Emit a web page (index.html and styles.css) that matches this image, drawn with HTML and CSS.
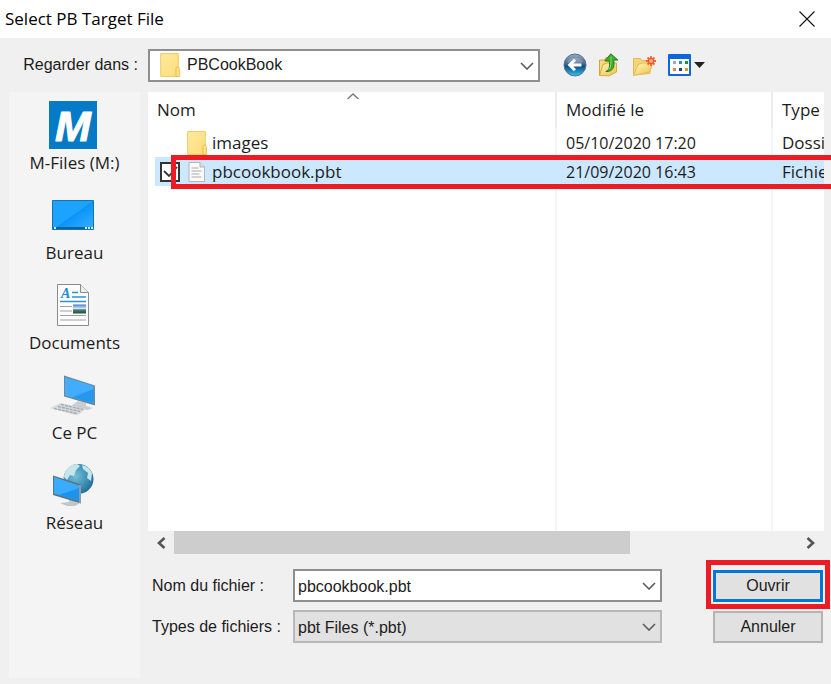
FILE: index.html
```html
<!DOCTYPE html>
<html lang="fr">
<head>
<meta charset="utf-8">
<meta name="viewport" content="width=device-width, initial-scale=1">
<title>Select PB Target File</title>
<link rel="stylesheet" href="styles.css">
</head>
<body>
<svg class="defs" aria-hidden="true">
  <defs>
    <linearGradient id="folder" x1="0" y1="0" x2="1" y2="1"><stop offset="0" stop-color="#ffe9a2"/><stop offset="1" stop-color="#ffdc78"/></linearGradient>
    <linearGradient id="gold" x1="0" y1="0" x2="1" y2="1"><stop offset="0" stop-color="#fff6b8"/><stop offset="1" stop-color="#efc04c"/></linearGradient>
    <linearGradient id="screen" x1="0" y1="0" x2="1" y2="1"><stop offset="0" stop-color="#1ca3ff"/><stop offset=".5" stop-color="#1ca3ff"/><stop offset=".51" stop-color="#0a94f8"/><stop offset="1" stop-color="#38b0ff"/></linearGradient>
    <linearGradient id="ball" x1="0" y1="0" x2="0" y2="1"><stop offset="0" stop-color="#9aa9bd"/><stop offset=".45" stop-color="#42698f"/><stop offset=".55" stop-color="#0b4c83"/><stop offset="1" stop-color="#32c5ef"/></linearGradient>
    <radialGradient id="globe" cx=".4" cy=".4" r=".65"><stop offset="0" stop-color="#75bfd9"/><stop offset=".6" stop-color="#3f91b7"/><stop offset="1" stop-color="#286b91"/></radialGradient>
    <linearGradient id="photo" x1="0" y1="0" x2="0" y2="1"><stop offset="0" stop-color="#427bd0"/><stop offset=".45" stop-color="#d3e8f3"/><stop offset=".6" stop-color="#477e72"/><stop offset="1" stop-color="#1e513e"/></linearGradient>
    <symbol id="i-folder" viewBox="0 0 20 24">
      <path d="M.7.5h17.6v23H.7z" fill="url(#folder)" stroke="#f0cd5c"/>
      <path d="M16 23.5v-8l1-1.5h1.3l1 1.500v8z" fill="#ffe48c" stroke="#e8bd45"/>
    </symbol>
    <symbol id="i-chevron" viewBox="0 0 14 8">
      <path d="M1 1l6 6 6-6" fill="none" stroke="#5c5c5c" stroke-width="1.6"/>
    </symbol>
  </defs>
</svg>

<div class="dialog">
  <header class="titlebar">
    <h1>Select PB Target File</h1>
    <button class="close" type="button" aria-label="Fermer">
      <svg width="16" height="16" viewBox="0 0 16 16"><path d="M.5.500l15 15M15.500.500l-15 15" stroke="#111" stroke-width="1.1"/></svg>
    </button>
  </header>

  <div class="body">
    <label class="look-label" for="look">Regarder dans :</label>
    <div class="topbar">
      <div class="combo look">
        <svg class="combo-icon" width="20" height="24"><use href="#i-folder"/></svg>
        <select id="look"><option>PBCookBook</option></select>
        <svg class="chevron" width="14" height="8"><use href="#i-chevron"/></svg>
      </div>
      <div class="tools">
        <button type="button" aria-label="Précédent">
          <svg width="24" height="24" viewBox="0 0 24 24">
            <circle cx="12" cy="12" r="11" fill="url(#ball)" stroke="#587594"/>
            <path d="M4 9a9 8 0 0 1 16 0q-8 4-16 0z" fill="#fff" opacity=".22"/>
            <path d="M18.500 12H7.500M12 6.800L6.700 12l5.300 5.200" fill="none" stroke="#fff" stroke-width="3"/>
          </svg>
        </button>
        <button type="button" aria-label="Dossier parent">
          <svg width="24" height="24" viewBox="0 0 24 24">
            <path d="M1.500 22V7h5l1.500-2.500h6V20z" fill="#f5dc80" stroke="#d4a63a"/>
            <path d="M1.500 22.500L5 11.500l4-1.500h9.500v9L11 22.800z" fill="url(#gold)" stroke="#d9ab3d"/>
            <path d="M7.800 18.500c4.200-1.500 4-6 3.500-10.500H6.800L12.800.800l7 6.200h-4c.8 6.500-.5 12-8 11.500z" fill="#3cab2e" stroke="#23791c"/>
            <path d="M13 3.500c0 6 .5 10-2 13" fill="none" stroke="#8fdd65"/>
          </svg>
        </button>
        <button type="button" aria-label="Nouveau dossier">
          <svg width="24" height="24" viewBox="0 0 24 24">
            <path d="M.5 22V5.500h7l1.500 2h8v13z" fill="#f4d679" stroke="#e4ba58"/>
            <path d="M.5 22.500L5 11.500l4-1.500h11l-3.500 9z" fill="url(#gold)" stroke="#e4ba58"/>
            <path d="M18 3v10M13 8h10M14.500 4.500l7 7M21.500 4.500l-7 7" stroke="#f8613c" stroke-width="1.800"/>
            <circle cx="18" cy="8" r="2.600" fill="#ffad70" stroke="#ee4524"/>
          </svg>
        </button>
        <button class="view" type="button" aria-label="Affichage">
          <svg width="37" height="24" viewBox="0 0 37 24">
            <rect x="0" y="1" width="23" height="22" rx="1" fill="#0c68d8"/>
            <path d="M2 6h19v15H2z" fill="#fff"/>
            <path d="M5 8h3v3H5z" fill="#a9a2cf"/><path d="M11 8h3v3h-3z" fill="#3c82cf"/><path d="M17 8h3v3h-3z" fill="#159a20"/>
            <path d="M5 15h3v3H5z" fill="#f4794d"/><path d="M11 15h3v3h-3z" fill="#143f9a"/><path d="M17 15h3v3h-3z" fill="#cba318"/>
            <path d="M26 9h11l-5.500 6z" fill="#222"/>
          </svg>
        </button>
      </div>
    </div>

    <nav class="places" aria-label="Emplacements">
      <a href="#mfiles">
        <svg width="48" height="48" viewBox="0 0 48 48"><path d="M0 0h48v48H0z" fill="#057ac6"/><text class="m-logo" x="24" y="40" text-anchor="middle">M</text></svg>
        <span>M-Files (M:)</span>
      </a>
      <a href="#bureau">
        <svg width="48" height="48" viewBox="0 0 48 48">
          <path d="M3.500 9.500h41v29h-41z" fill="url(#screen)" stroke="#1473ad"/>
          <path d="M4 36h40v2H4z" fill="#126398"/><path d="M5 36h2v2H5zm31 0h2v2h-2zm3 0h2v2h-2zm3 0h2v2h-2z" fill="#cfeeff"/>
        </svg>
        <span>Bureau</span>
      </a>
      <a href="#documents">
        <svg width="48" height="48" viewBox="0 0 48 48">
          <path d="M8.500 3.500h23l8 8v33h-31z" fill="#fcfcfc" stroke="#8b8b8b"/>
          <path d="M31.500 3.500v8h8" fill="#eee" stroke="#8b8b8b"/>
          <text class="doc-letter" x="12" y="17">A</text>
          <path d="M23 11.500h6M23 16h14M11 20.500h26" stroke="#2c93cf" stroke-width="1.4"/>
          <path d="M11 25.500h12M11 30h12M11 34.500h26M11 39h26" stroke="#a2a2a2"/>
          <path d="M24 23.500h13v9H24z" fill="url(#photo)"/>
        </svg>
        <span>Documents</span>
      </a>
      <a href="#pc">
        <svg width="48" height="48" viewBox="0 0 48 48">
          <path d="M22 35l7-5 8 2v3l7 2-5 2-14-2z" fill="#c8cdd1"/>
          <path d="M15 4.500l31 10v20l-31-9z" fill="#6d8796"/>
          <path d="M16 6l28.500 9v17.500L16 24.500z" fill="#42adff"/><path d="M44.500 18v14.500L23 26.500z" fill="#2598ee"/>
          <path d="M1 37l11-5 25 6-9 6.500z" fill="#d5d9dc"/>
          <path d="M5 37.500l23 5M9 35.500l22 5M12 33.500l22 5" stroke="#a4acb1" stroke-width="1.400" stroke-dasharray="3 1"/>
        </svg>
        <span>Ce PC</span>
      </a>
      <a href="#reseau">
        <svg width="48" height="48" viewBox="0 0 48 48">
          <circle cx="29.500" cy="18" r="15" fill="url(#globe)"/>
          <path d="M15 16c1-8 6-12 13-13l3 2-4 4-2 6-4-1-3 5zM33 4c5 1 8 4 10 8l-1 8-4-3 1-5-5-4z" fill="#c7e6e9"/>
          <path d="M20 36h6v5l5 1-5 3h-8l-7-3 9-1z" fill="#c1c6ca"/>
          <path d="M4 14.500l28 9v19L4 34z" fill="#5b7484"/>
          <path d="M5 16l25 8.500v15.500L5 32.500z" fill="#39acff"/><path d="M30 27v13L10 34z" fill="#1b94ed"/>
          <path d="M31 24v18" stroke="#bcc5ca"/>
        </svg>
        <span>Réseau</span>
      </a>
    </nav>

    <main class="content">
      <div class="list-frame">
        <svg class="sort" width="12" height="7" viewBox="0 0 12 7"><path d="M.5 6L6 1l5.500 5" fill="none" stroke="#7b7b7b" stroke-width="1.500"/></svg>
        <div class="list">
          <table>
            <colgroup><col><col class="col-date"><col class="col-type"></colgroup>
            <thead><tr><th>Nom</th><th>Modifié le</th><th>Type</th></tr></thead>
            <tbody>
              <tr>
                <td><div class="file"><svg width="20" height="24"><use href="#i-folder"/></svg><span>images</span></div></td>
                <td class="date">05/10/2020 17:20</td><td>Dossier</td>
              </tr>
              <tr class="selected">
                <td><div class="file"><span class="tick"><input type="checkbox" checked aria-label="pbcookbook.pbt"><svg width="20" height="20" viewBox="0 0 20 20"><path d="M4 9l5 5 8-9" fill="none" stroke="#333" stroke-width="1.800"/></svg></span>
                  <svg width="20" height="24" viewBox="0 0 20 24"><path d="M2 2.500h11l4.500 4.500v14.500H2z" fill="#fafafa" stroke="#b5b5b5"/><path d="M13 2.500V7h4.500" fill="#ddd" stroke="#b5b5b5"/><path d="M4.500 8h7M4.500 11h10M4.500 14h8M4.500 17h10" stroke="#aaa"/></svg>
                  <span>pbcookbook.pbt</span></div></td>
                <td class="date">21/09/2020 16:43</td><td>Fichier PBT</td>
              </tr>
              <tr class="rest"><td></td><td></td><td></td></tr>
            </tbody>
          </table>
        </div>
        <div class="mark mark-row"></div>
      </div>
      <div class="scrollbar">
        <button type="button" aria-label="Gauche"><svg width="10" height="12" viewBox="0 0 10 12"><path d="M8.500 1L3 6l5.500 5" fill="none" stroke="#555" stroke-width="2.600"/></svg></button>
        <div class="track"><div class="thumb"></div></div>
        <button type="button" aria-label="Droite"><svg width="10" height="12" viewBox="0 0 10 12"><path d="M1.500 1L7 6l-5.500 5" fill="none" stroke="#555" stroke-width="2.600"/></svg></button>
      </div>

      <form class="fields">
        <label for="name">Nom du fichier :</label>
        <div class="combo">
          <input id="name" type="text" value="pbcookbook.pbt">
          <svg class="chevron" width="14" height="8"><use href="#i-chevron"/></svg>
        </div>
        <div class="action"><button class="push primary" type="button">Ouvrir</button><div class="mark mark-open"></div></div>
        <label for="types">Types de fichiers :</label>
        <div class="combo muted">
          <select id="types"><option>pbt Files (*.pbt)</option></select>
          <svg class="chevron" width="14" height="8"><use href="#i-chevron"/></svg>
        </div>
        <div class="action"><button class="push" type="button">Annuler</button></div>
      </form>
    </main>
  </div>
</div>
</body>
</html>
```
FILE: styles.css
```css
:root {
  --ui: "Open Sans", "Noto Sans", sans-serif;
  --form: "Liberation Sans", Arial, sans-serif;
  --face: #f0f0f0;
  --red: #ed1c24;
}

* { box-sizing: border-box; }

body {
  margin: 0;
  overflow: hidden;
  background: var(--face);
  color: #1c1c1c;
  font: 17px/24px var(--ui);
}

button, input, select { font: 16px/24px var(--form); color: inherit; }
svg { display: block; flex: none; }
.defs { position: absolute; width: 0; height: 0; }

.dialog { display: flex; flex-direction: column; min-height: 100vh; }

.titlebar {
  display: flex;
  align-items: center;
  justify-content: space-between;
  height: 38px;
  padding: 0 16px 0 5px;
  background: #fff;
}
.titlebar h1 { margin: 0; color: #000; font-size: 17px; font-weight: 400; }
.close { padding: 0; border: 0; background: none; }

.body {
  flex: 1;
  display: grid;
  grid-template-columns: 131px minmax(0, 1fr);
  grid-template-rows: 54px 1fr;
  column-gap: 8px;
  padding: 0 7px 6px 9px;
}

.look-label { align-self: center; justify-self: end; padding-right: 2px; font: 16px/24px var(--form); }
.topbar { display: flex; align-items: center; }
.look { flex: 1; }
.tools { display: flex; gap: 11px; width: 284px; padding-left: 23px; }
.tools button { padding: 0; border: 0; background: none; }

.combo { position: relative; height: 33px; }
.combo select, .combo input {
  display: block;
  width: 100%;
  height: 100%;
  margin: 0;
  padding: 0 36px 0 3px;
  border: 2px solid #8f8f8f;
  border-radius: 0;
  outline: 0;
  background: #fff;
  appearance: none;
}
.combo.muted select { border-color: #b8b8b8; background: #e1e1e1; }
.combo.look select { padding-left: 37px; }
.combo-icon { position: absolute; top: 4px; left: 12px; }
.chevron { position: absolute; top: 13px; right: 6px; pointer-events: none; }

.places {
  display: flex;
  flex-direction: column;
  gap: 16px;
  padding-top: 9px;
  background: #f4f4f4;
}
.places a {
  display: flex;
  flex-direction: column;
  align-items: center;
  gap: 2px;
  color: inherit;
  text-decoration: none;
}
.places svg { margin-right: 3px; }
.m-logo {
  font: italic bold 43px "Liberation Sans", sans-serif;
  fill: #fff;
  stroke: #fff;
  stroke-linejoin: round;
}
.doc-letter { font: italic bold 14px "Liberation Serif", serif; fill: #1b8bd0; }

.content { display: flex; flex-direction: column; }
.list-frame { position: relative; flex: 1; display: flex; }
.sort { position: absolute; top: 1px; left: 199px; }
.list { flex: 1; min-width: 0; overflow: hidden; background: #fff; }

table { width: 100%; height: 100%; border-collapse: collapse; table-layout: fixed; }
.col-date { width: 216px; }
.col-type { width: 52px; }
th, td { overflow: hidden; padding: 0 0 0 9px; text-align: left; white-space: nowrap; }
th { height: 36px; font-weight: 400; }
td { height: 29px; }
th + th, td + td { border-left: 2px solid #f2f7fd; }
th + th { border-color: #ececec; }
.date { font-size: 16px; }
.selected td {
  background: #cce8ff;
  border-color: #cce8ff;
}
.selected td:first-child { background: linear-gradient(to right, #fff 7px, #cce8ff 7px); }
.rest td { height: auto; }

.file { display: flex; align-items: center; height: 28px; padding-left: 30px; }
.file > span:last-child { padding-left: 5px; }
.tick { position: relative; width: 20px; height: 20px; margin: 0 7px 0 -27px; }
.tick input {
  appearance: none;
  display: block;
  width: 20px;
  height: 20px;
  margin: 0;
  border: 2px solid #333;
  background: #fff;
}
.tick svg { position: absolute; inset: 0; pointer-events: none; }

.mark { position: absolute; border: 5px solid var(--red); pointer-events: none; }
.mark-row { top: 63px; right: -7px; left: 23px; height: 34px; border-right: 0; }
.mark-open { inset: -10px -7px -7px; }

.scrollbar { display: flex; height: 23px; }
.scrollbar button {
  display: grid;
  place-items: center;
  width: 26px;
  padding: 0;
  border: 0;
  background: none;
}
.track { flex: 1; }
.thumb { width: 73%; height: 100%; background: #cdcdcd; }

.fields {
  display: grid;
  grid-template-columns: 141px minmax(0, 1fr) 110px;
  align-items: center;
  row-gap: 8px;
  margin: 0;
  padding: 15px 1px 35px 4px;
}
.fields label { font: 16px/24px var(--form); }
.fields .combo { margin-right: 51px; }
.fields input, .fields select { padding-top: 2px; }
.action { position: relative; height: 32px; }
.push {
  width: 100%;
  height: 100%;
  padding: 0;
  border: 2px solid #b4b4b4;
  background: #e1e1e1;
}
.primary { border: 3px solid #0078d7; }
```
